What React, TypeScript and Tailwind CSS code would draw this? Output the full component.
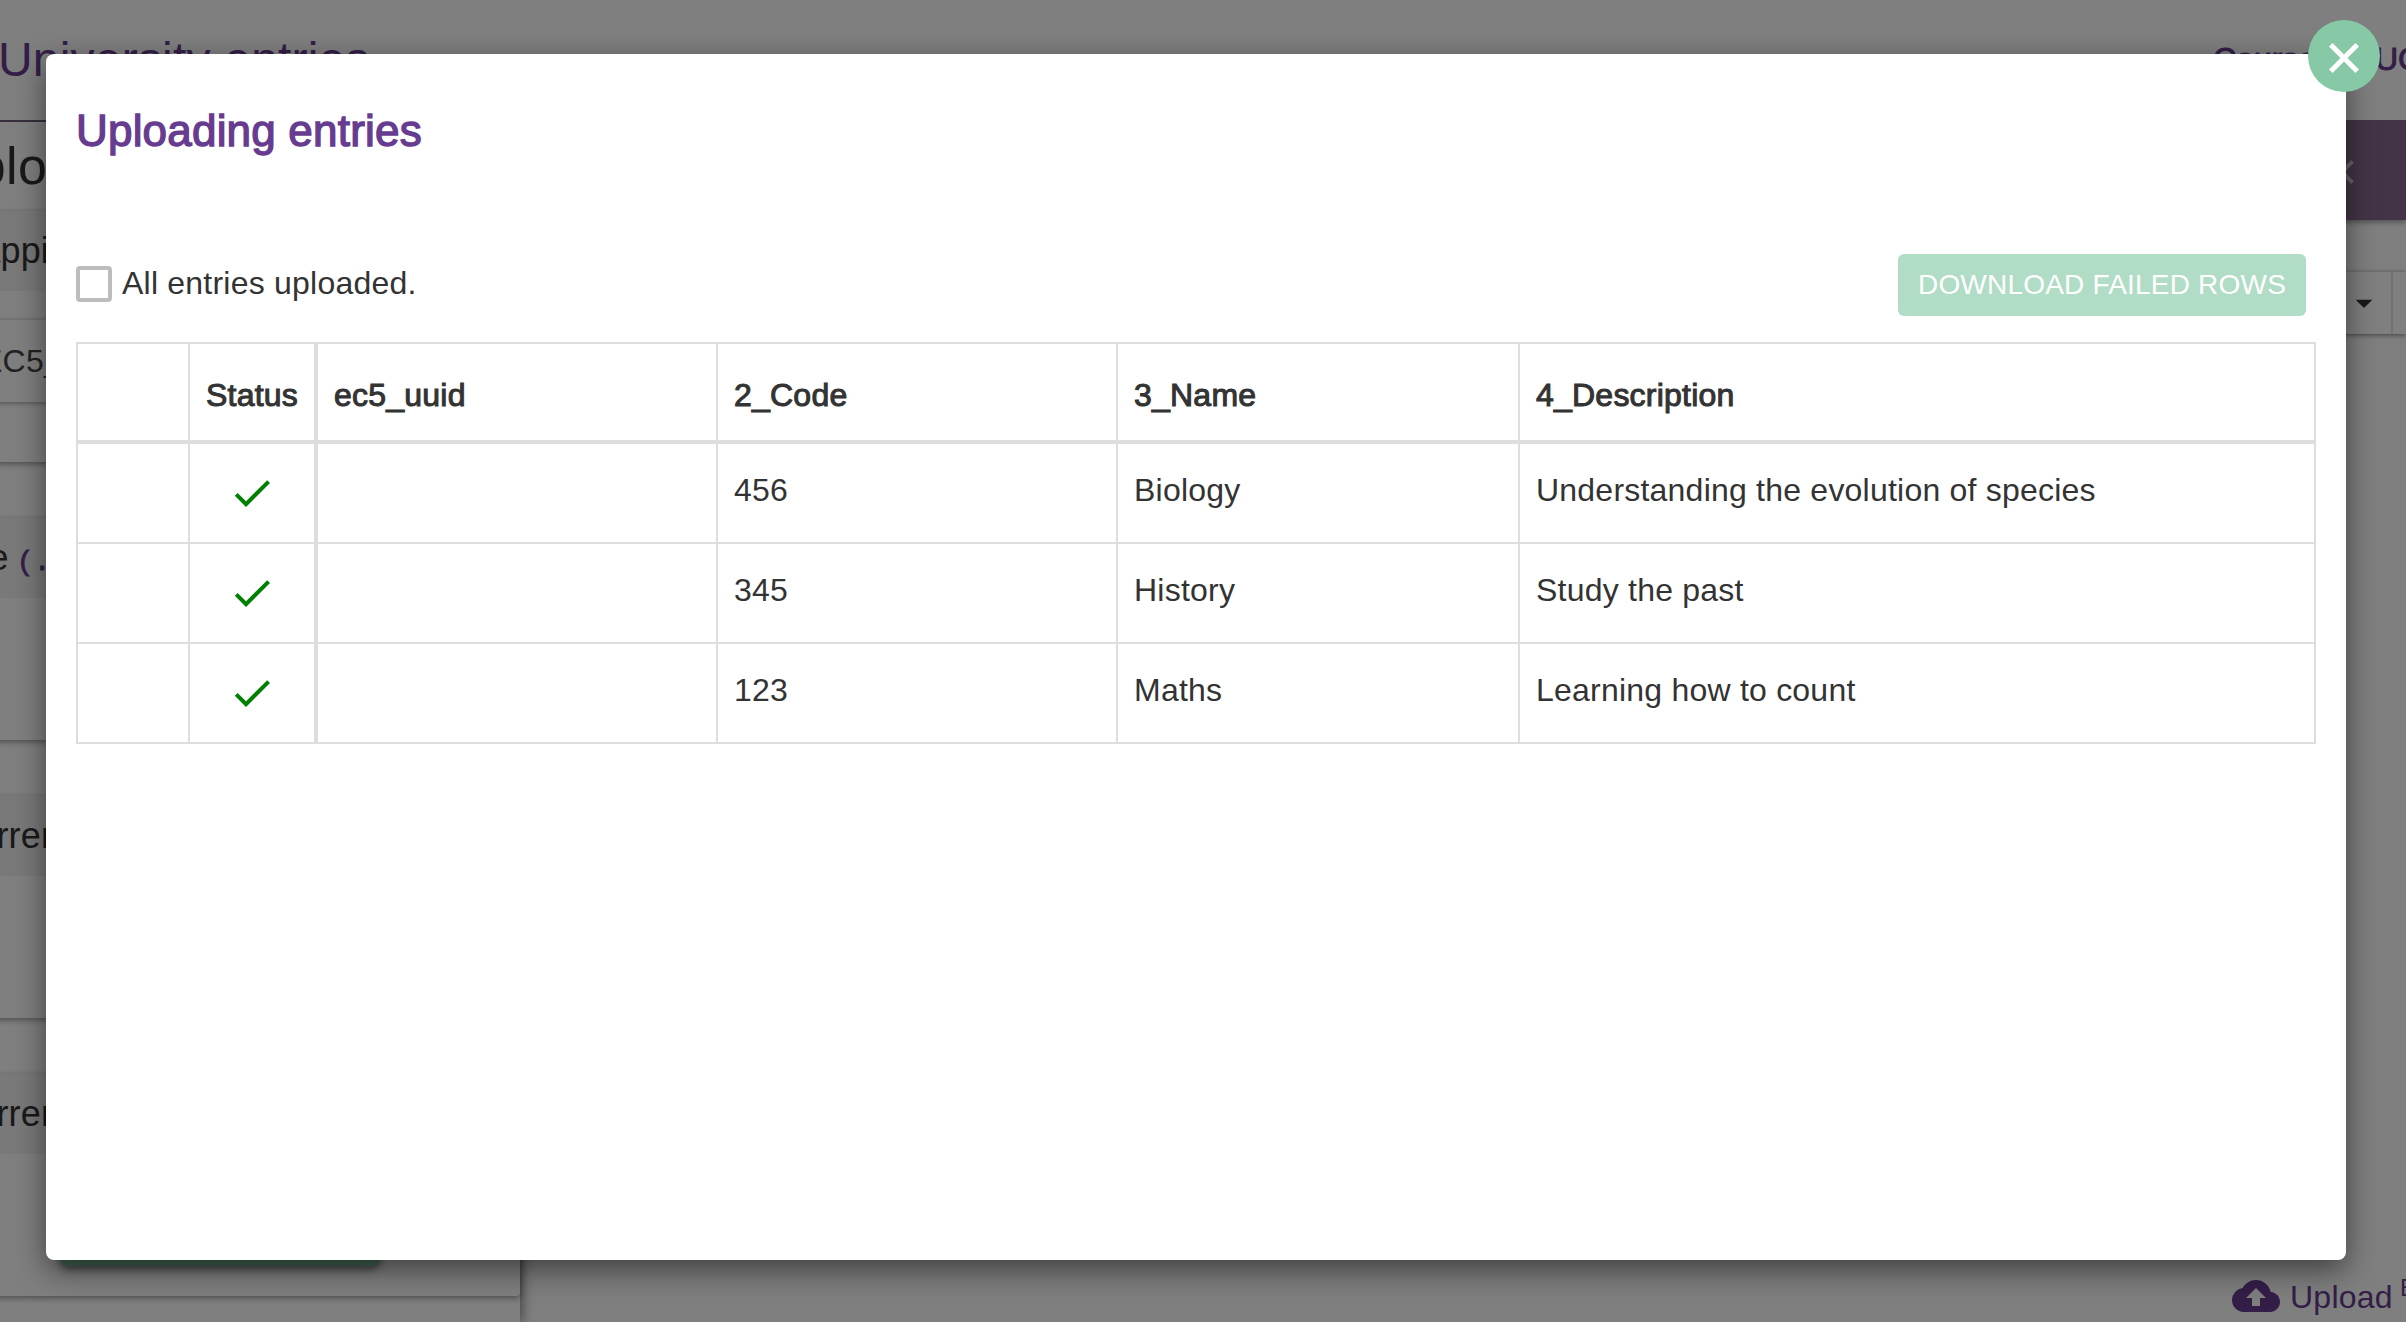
import type { ReactNode } from "react";
import { MdCheck, MdCloudUpload, MdArrowDropDown } from "react-icons/md";

const headers = ["ec5_uuid", "2_Code", "3_Name", "4_Description"];
const rows = [
  ["", "456", "Biology", "Understanding the evolution of species"],
  ["", "345", "History", "Study the past"],
  ["", "123", "Maths", "Learning how to count"],
];

const cell = "border-r-2 border-b-2 border-[#ddd] px-4 h-[100px]";

function Cross({ className }: { className: string }) {
  return (
    <svg viewBox="0 0 30 30" className={className} fill="none" stroke="currentColor" strokeWidth="5">
      <path d="M1.8 1.8 28.2 28.2M28.2 1.8 1.8 28.2" />
    </svg>
  );
}

function Card({ title, code, height, children }: { title: string; code?: string; height: string; children?: ReactNode }) {
  return (
    <section className={`mb-14 -ml-4 shrink-0 rounded-br bg-white shadow-[0_2px_6px_rgba(0,0,0,0.4)] ${height}`}>
      <h3 className="flex h-20 items-center bg-[#f3f3f3] pb-px text-[36px] tracking-[0.2px] whitespace-nowrap text-[#333]">
        <span className="-ml-[34px]">
          {title}
          {code && (
            <code className="ml-[8px] font-['Liberation_Mono',monospace] text-[28px] text-[#673c90] [-webkit-text-stroke:0.8px]">{code}</code>
          )}
        </span>
      </h3>
      {children}
    </section>
  );
}

function Page() {
  return (
    <div className="isolate flex h-full flex-col">
      <header className="relative z-10 flex h-[120px] shrink-0 items-start justify-between bg-white text-[#673c90]">
        <h1 className="-ml-[2px] mt-[30px] text-[48px] leading-[60px] tracking-[0.2px]">University entries</h1>
        <div className="mt-[39px] flex w-[193px] justify-between text-[32px] leading-10 [-webkit-text-stroke:1px]">
          <span>Course</span>
          <span className="w-[31px] overflow-hidden">UCL</span>
        </div>
      </header>
      <div className="flex min-h-0 flex-1">
        <aside className="flex w-[520px] shrink-0 flex-col border-t-2 border-[#6f6079] shadow-[2px_0_12px_rgba(0,0,0,0.5)]">
          <h2 className="-ml-[61px] h-[89px] shrink-0 pt-[12px] text-[52px] leading-[64px] tracking-[0.3px] text-[#333]">Upload</h2>
          <Card title="Mapping" height="h-[251px]">
            <div className="mt-[29px] flex h-[82px] items-center shadow-[0_1px_5px_rgba(0,0,0,0.4)]">
              <span className="-ml-[3px] text-[32px] tracking-[0.25px] text-[#444]">EC5_AUTO</span>
            </div>
          </Card>
          <Card title="File" code="(.csv)" height="h-[222px]" />
          <Card title="Current" height="h-[222px]" />
          <Card title="Current" height="h-[222px]">
            <div className="mt-[50px] ml-[76px] h-[62px] w-[320px] rounded-lg bg-[#85c8a5] shadow-[0_3px_8px_rgba(0,0,0,0.5)]" />
          </Card>
        </aside>
        <main className="flex flex-1 flex-col">
          <div className="flex h-[100px] items-center justify-end bg-[#866b8f] pt-1 pr-[52px] shadow-[0_2px_6px_rgba(0,0,0,0.4)]">
            <Cross className="size-6 text-[#cfc4d3]" />
          </div>
          <div className="mt-[52px] flex h-[62px] shadow-[0_1px_5px_rgba(0,0,0,0.5)]">
            <div className="flex flex-1 items-center justify-end border-r-2 border-black/10">
              <MdArrowDropDown className="mr-[7px] size-[40px] text-[#333]" />
            </div>
            <div className="w-[13px]" />
          </div>
          <div className="mt-auto flex h-[58px] items-start justify-end text-[#673c90]">
            <MdCloudUpload className="mt-[8px] size-12 shrink-0" />
            <span className="mt-[13px] ml-[10px] w-[110px] text-[32px] leading-10 tracking-[0.25px]">Upload</span>
            <span className="mt-[11px] w-[6px] overflow-hidden text-[24px] leading-[26px]">BETA</span>
          </div>
        </main>
      </div>
    </div>
  );
}

function Dialog() {
  return (
    <div className="relative mt-[54px] ml-[46px] h-[1206px] w-[2300px] rounded-lg bg-white px-[30px] text-[32px] tracking-[0.22px] text-[#333] shadow-[0_10px_30px_rgba(0,0,0,0.5)]">
      <button className="absolute top-[-34px] right-[-34px] flex size-[72px] items-center justify-center rounded-full bg-[#87c8a6] pt-[3px] text-white">
        <Cross className="size-[30px]" />
      </button>
      <h2 className="pt-[50px] text-[44px] leading-[54px] tracking-[0.2px] text-[#673c90] [-webkit-text-stroke:1.375px]">Uploading entries</h2>
      <div className="mt-[96px] flex h-[62px] items-center justify-between pr-[10px]">
        <label className="flex items-center pb-[2px]">
          <span className="mr-[10px] size-9 rounded-[4px] border-4 border-[#bdbdbd]" />
          <span className="pb-[2px] leading-10">All entries uploaded.</span>
        </label>
        <button className="h-[62px] w-[408px] rounded-md bg-[#b1dcc6] text-[28px] tracking-[0.2px] whitespace-nowrap text-white">DOWNLOAD FAILED ROWS</button>
      </div>
      <table className="mt-[26px] w-[2240px] table-fixed border-separate border-spacing-0 border-t-2 border-l-2 border-[#ddd]">
        <colgroup>
          <col className="w-[112px]" />
          <col className="w-[128px]" />
          <col className="w-[400px]" />
          <col className="w-[400px]" />
          <col className="w-[402px]" />
          <col className="w-[796px]" />
        </colgroup>
        <thead>
          <tr className="text-left [-webkit-text-stroke:1.04px]">
            <th className={`${cell} border-b-4`} />
            <th className={`${cell} border-r-4 border-b-4 pt-[6px] font-normal`}>Status</th>
            {headers.map((h) => (
              <th key={h} className={`${cell} border-b-4 pt-[6px] font-normal`}>{h}</th>
            ))}
          </tr>
        </thead>
        <tbody>
          {rows.map((r) => (
            <tr key={r[1]}>
              <td className={cell} />
              <td className={`${cell} border-r-4`}>
                <MdCheck className="mx-auto size-[48px] text-[#008000]" />
              </td>
              {r.map((v, i) => (
                <td key={i} className={`${cell} pb-[7px]`}>{v}</td>
              ))}
            </tr>
          ))}
        </tbody>
      </table>
    </div>
  );
}

export default function App() {
  return (
    <div className="relative h-[1322px] w-[2406px] overflow-hidden bg-white font-['Liberation_Sans',Arial,sans-serif]">
      <Page />
      <div className="absolute inset-0 bg-black/50">
        <Dialog />
      </div>
    </div>
  );
}
